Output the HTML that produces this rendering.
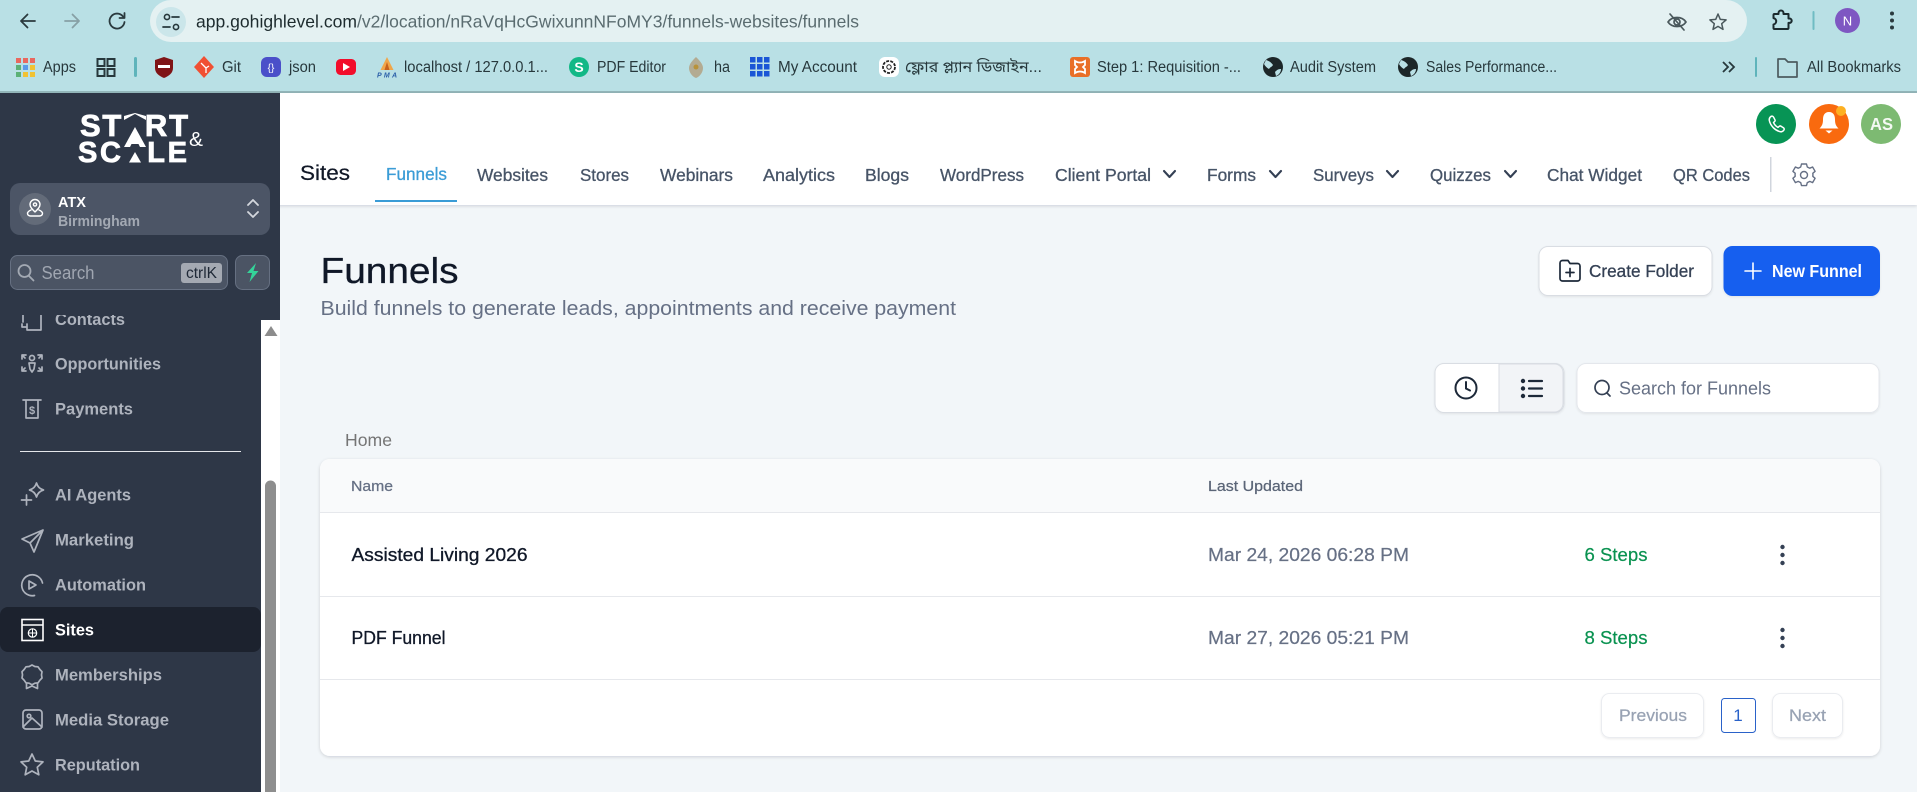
<!DOCTYPE html>
<html lang="en">
<head>
<meta charset="utf-8">
<title>Funnels</title>
<style>
html,body{margin:0;padding:0;width:1917px;height:792px;overflow:hidden;background:#f2f6f9}
svg{display:block;position:absolute;left:0;top:0}
text{font-family:"Liberation Sans","Noto Sans CJK SC",sans-serif;white-space:pre}
.bm{font-size:15.5px;fill:#27383c}
.side{font-size:17px;font-weight:700;fill:#aeb3bd}
.nav{font-size:17.5px;fill:#475467;stroke:#475467;stroke-width:.3px}
.ic{fill:none;stroke:#aeb3bd;stroke-width:1.7;stroke-linecap:round;stroke-linejoin:round}
.ch{fill:none;stroke:#344054;stroke-width:2.1;stroke-linecap:round;stroke-linejoin:round}
.tb{fill:none;stroke:#2a3a3e;stroke-width:1.8;stroke-linecap:round;stroke-linejoin:round}
</style>
</head>
<body>
<svg width="1917" height="792" viewBox="0 0 1917 792" xmlns="http://www.w3.org/2000/svg">
<defs>
<clipPath id="menuClip"><rect x="0" y="315" width="261" height="477"/></clipPath>
<filter id="sh" x="-2%" y="-10%" width="104%" height="125%"><feDropShadow dx="0" dy="1" stdDeviation="1.5" flood-color="#101828" flood-opacity=".16"/></filter>
<filter id="sh2" x="-10%" y="-10%" width="120%" height="125%"><feDropShadow dx="0" dy="1" stdDeviation="1" flood-color="#101828" flood-opacity=".08"/></filter>
</defs>

<!-- page -->
<rect width="1917" height="792" fill="#f2f6f9"/>

<!-- browser chrome -->
<rect width="1917" height="93" fill="#b9e0e5"/>
<rect y="91" width="1917" height="2" fill="#93b6ba"/>
<path d="M171 0H1726a21 21 0 0 1 21 21a21 21 0 0 1-21 21H171a21 21 0 0 1-21-21a21 21 0 0 1 21-21z" fill="#e4f1f2"/>
<path class="tb" d="M35 21H21M27.500 14.500L21 21l6.500 6.500"/>
<path class="tb" style="stroke:#87a0a5" d="M65 21h14M72.500 14.500L79 21l-6.500 6.500"/>
<path class="tb" d="M123 16.500a7.500 7.500 0 1 0 1.500 5.500M124.500 13v5h-5"/>
<circle cx="171" cy="22" r="15" fill="#cbe6ea"/>
<path d="M172 17h7M163 27h7" stroke="#27383c" stroke-width="1.700" fill="none" stroke-linecap="round"/>
<circle cx="167" cy="17" r="2.600" fill="none" stroke="#27383c" stroke-width="1.600"/>
<circle cx="176" cy="27" r="2.600" fill="none" stroke="#27383c" stroke-width="1.600"/>
<text x="196" y="27.500" font-size="17.500" fill="#1d2b2e" textLength="161" lengthAdjust="spacingAndGlyphs">app.gohighlevel.com</text>
<text x="357" y="27.500" font-size="17.500" fill="#5a6c70" textLength="502" lengthAdjust="spacingAndGlyphs">/v2/location/nRaVqHcGwixunnNFoMY3/funnels-websites/funnels</text>

<!-- omnibox right icons -->
<g fill="none" stroke="#4a585c" stroke-width="1.700" stroke-linecap="round" stroke-linejoin="round">
<path d="M1668 22c4-6 14-6 18 0c-4 6-14 6-18 0z"/><circle cx="1677" cy="22" r="3"/><path d="M1670 14l14 16"/>
<path d="M1718 14l2.300 5.400 5.800.5-4.400 3.800 1.300 5.700-5-3-5 3 1.300-5.700-4.400-3.800 5.800-.5z" stroke-width="1.500"/>
</g>
<path d="M1774 14h4.500v-1a2.500 2.500 0 0 1 5 0v1h5v4.500h1a2.200 2.200 0 0 1 0 4.400h-1v5.100a1 1 0 0 1-1 1h-13a1 1 0 0 1-1-1v-3.500c1.500-.3 2.700-1.600 2.700-3.200s-1.200-2.900-2.700-3.200V15a1 1 0 0 1 1-1z" fill="none" stroke="#1b2a2e" stroke-width="2" stroke-linejoin="round"/>
<rect x="1812.500" y="11" width="2" height="19" rx="1" fill="#6fbcc3"/>
<circle cx="1847.500" cy="20.500" r="12.500" fill="#7e57c2"/>
<text x="1847.500" y="25.500" font-size="13" fill="#fff" text-anchor="middle">N</text>
<g fill="#2a3a3e"><circle cx="1892" cy="13.500" r="2"/><circle cx="1892" cy="20.500" r="2"/><circle cx="1892" cy="27.500" r="2"/></g>

<!-- bookmarks -->
<g>
<g>
<rect x="16" y="58" width="5" height="5" fill="#e9685e"/><rect x="23" y="58" width="5" height="5" fill="#e9685e"/><rect x="30" y="58" width="5" height="5" fill="#e9685e"/>
<rect x="16" y="65" width="5" height="5" fill="#5cb176"/><rect x="23" y="65" width="5" height="5" fill="#5b9be8"/><rect x="30" y="65" width="5" height="5" fill="#f1c232"/>
<rect x="16" y="72" width="5" height="5" fill="#5cb176"/><rect x="23" y="72" width="5" height="5" fill="#f1c232"/><rect x="30" y="72" width="5" height="5" fill="#f1c232"/>
</g>
<text class="bm" x="43" y="72" textLength="33" lengthAdjust="spacingAndGlyphs">Apps</text>
<g fill="none" stroke="#27383c" stroke-width="2"><rect x="97.500" y="59" width="7" height="7"/><rect x="107.500" y="59" width="7" height="7"/><rect x="97.500" y="69" width="7" height="7"/><rect x="107.500" y="69" width="7" height="7"/></g>
<rect x="134" y="57" width="3" height="20" rx="1.500" fill="#5fb4bb"/>
<path d="M155 60l9-3 9 3v8c0 5-4 8-9 10c-5-2-9-5-9-10z" fill="#7f1416"/><rect x="158" y="65" width="12" height="3" fill="#fff"/>
<path d="M204 56l10 11-10 11-10-11z" fill="#f05033"/><path d="M201 63l5 5M206 68v5M206 68l3-2" stroke="#fff" stroke-width="1.300" fill="none"/>
<text class="bm" x="222" y="72" textLength="19" lengthAdjust="spacingAndGlyphs">Git</text>
<rect x="261" y="57" width="20" height="20" rx="6" fill="#4a4fc9"/><text x="271" y="71" font-size="10" fill="#fff" text-anchor="middle">{}</text>
<text class="bm" x="289" y="72" textLength="27" lengthAdjust="spacingAndGlyphs">json</text>
<rect x="336" y="59" width="20" height="16" rx="4.500" fill="#f20d2b"/><path d="M343 63l7 4-7 4z" fill="#fff"/>
<path d="M387 57l6.500 13h-13z" fill="#f0a64a"/><path d="M387 62l2.500 8h-5z" fill="#c7611b"/>
<text x="377" y="77.500" font-size="7" font-weight="700" font-style="italic" fill="#2a5ea8" textLength="20">PMA</text>
<text class="bm" x="404" y="72" textLength="144" lengthAdjust="spacingAndGlyphs">localhost / 127.0.0.1...</text>
<circle cx="579" cy="67" r="10" fill="#12b886"/><text x="579" y="72" font-size="14" font-weight="700" fill="#fff" text-anchor="middle">S</text>
<text class="bm" x="597" y="72" textLength="69" lengthAdjust="spacingAndGlyphs">PDF Editor</text>
<path d="M696 57c3 3 7 7 7 11c0 5-4 9-7 10c-3-1-7-5-7-10c0-4 4-8 7-11z" fill="#b3ab92"/><circle cx="696" cy="67" r="2.500" fill="#b8923a"/>
<text class="bm" x="714" y="72" textLength="16" lengthAdjust="spacingAndGlyphs">ha</text>
<g fill="#1a56d6"><rect x="750" y="57" width="5.500" height="5.500"/><rect x="757" y="57" width="5.500" height="5.500"/><rect x="764" y="57" width="5.500" height="5.500"/><rect x="750" y="64" width="5.500" height="5.500"/><rect x="757" y="64" width="5.500" height="5.500"/><rect x="764" y="64" width="5.500" height="5.500"/><rect x="750" y="71" width="5.500" height="5.500"/><rect x="757" y="71" width="5.500" height="5.500"/><rect x="764" y="71" width="5.500" height="5.500"/></g>
<text class="bm" x="778" y="72" textLength="79" lengthAdjust="spacingAndGlyphs">My Account</text>
<rect x="879" y="57" width="20" height="20" rx="6" fill="#fff"/><circle cx="889" cy="67" r="6" fill="none" stroke="#222" stroke-width="1.800" stroke-dasharray="3 1.200"/><circle cx="889" cy="67" r="2.200" fill="none" stroke="#222"/>
<text class="bm" x="905" y="72" textLength="137" lengthAdjust="spacingAndGlyphs" style="font-family:'Liberation Sans','Noto Sans Bengali','Noto Sans CJK SC',sans-serif">ফ্লোর প্ল্যান ডিজাইন...</text>
<rect x="1070" y="57" width="20" height="20" rx="3" fill="#e96f27"/><path d="M1075 61c3 2 7 2 10 0v4l-2 2 2 2v4c-3-2-7-2-10 0v-4l2-2-2-2z" fill="none" stroke="#fff" stroke-width="1.800"/>
<text class="bm" x="1097" y="72" textLength="144" lengthAdjust="spacingAndGlyphs">Step 1: Requisition -...</text>
<circle cx="1273" cy="67" r="10" fill="#1c2628"/><path d="M1266 60c3 1 5 2 7 5c-1 2-3 2-4 4c-2-1-4-3-5-5zM1275 72c2-2 3-3 6-3c0 3-2 6-5 7z" fill="#b9e0e5"/>
<text class="bm" x="1290" y="72" textLength="86" lengthAdjust="spacingAndGlyphs">Audit System</text>
<circle cx="1408" cy="67" r="10" fill="#1c2628"/><path d="M1401 60c3 1 5 2 7 5c-1 2-3 2-4 4c-2-1-4-3-5-5zM1410 72c2-2 3-3 6-3c0 3-2 6-5 7z" fill="#b9e0e5"/>
<text class="bm" x="1426" y="72" textLength="131" lengthAdjust="spacingAndGlyphs">Sales Performance...</text>
<path d="M1723 62l5 5-5 5M1729 62l5 5-5 5" fill="none" stroke="#27383c" stroke-width="1.800"/>
<rect x="1755" y="57" width="2" height="20" rx="1" fill="#5fb4bb"/>
<path d="M1778 59h7l3 3h9v15h-19z" fill="none" stroke="#4c5b5f" stroke-width="1.700" stroke-linejoin="round"/>
<text class="bm" x="1807" y="72" textLength="94" lengthAdjust="spacingAndGlyphs">All Bookmarks</text>
</g>

<!-- header -->
<rect x="261" y="93" width="1656" height="112" fill="#fff" filter="url(#sh)"/>
<text x="300" y="180" font-size="21" fill="#111827" stroke="#111827" stroke-width=".25" textLength="50" lengthAdjust="spacingAndGlyphs">Sites</text>
<text class="nav" x="386" y="180" style="fill:#3b9cd6;stroke:#3b9cd6" textLength="61" lengthAdjust="spacingAndGlyphs">Funnels</text>
<rect x="375" y="200" width="82" height="2" fill="#3b9cd6"/>
<text class="nav" x="477" y="181" textLength="71" lengthAdjust="spacingAndGlyphs">Websites</text>
<text class="nav" x="580" y="181" textLength="49" lengthAdjust="spacingAndGlyphs">Stores</text>
<text class="nav" x="660" y="181" textLength="73" lengthAdjust="spacingAndGlyphs">Webinars</text>
<text class="nav" x="763" y="181" textLength="72" lengthAdjust="spacingAndGlyphs">Analytics</text>
<text class="nav" x="865" y="181" textLength="44" lengthAdjust="spacingAndGlyphs">Blogs</text>
<text class="nav" x="940" y="181" textLength="84" lengthAdjust="spacingAndGlyphs">WordPress</text>
<text class="nav" x="1055" y="181" textLength="96" lengthAdjust="spacingAndGlyphs">Client Portal</text>
<path class="ch" d="M1164 171l5.500 6 5.500-6"/>
<text class="nav" x="1207" y="181" textLength="49" lengthAdjust="spacingAndGlyphs">Forms</text>
<path class="ch" d="M1270 171l5.500 6 5.500-6"/>
<text class="nav" x="1313" y="181" textLength="61" lengthAdjust="spacingAndGlyphs">Surveys</text>
<path class="ch" d="M1387 171l5.500 6 5.500-6"/>
<text class="nav" x="1430" y="181" textLength="61" lengthAdjust="spacingAndGlyphs">Quizzes</text>
<path class="ch" d="M1505 171l5.500 6 5.500-6"/>
<text class="nav" x="1547" y="181" textLength="95" lengthAdjust="spacingAndGlyphs">Chat Widget</text>
<text class="nav" x="1673" y="181" textLength="77" lengthAdjust="spacingAndGlyphs">QR Codes</text>
<rect x="1770" y="157" width="1.500" height="35" fill="#d0d5dd"/>
<g fill="none" stroke="#667085" stroke-width="1.400" stroke-linejoin="round">
<path d="M1801.500 164h5l.8 3 2.500 1.200 2.800-1.200 2.500 4.300-2.300 2c.2 1 .2 2 0 3l2.300 2-2.500 4.300-2.800-1.200-2.500 1.200-.8 3h-5l-.8-3-2.500-1.200-2.800 1.200-2.500-4.300 2.300-2c-.2-1-.2-2 0-3l-2.300-2 2.500-4.300 2.800 1.200 2.500-1.200z"/>
<circle cx="1804" cy="175" r="3.500"/>
</g>

<!-- top right circles -->
<circle cx="1776" cy="124" r="20" fill="#079455"/>
<path d="M1771 116.500c1-.7 2-.3 2.600.7l1.300 2.500c.4.800.2 1.500-.5 2l-.9.800c.9 2.100 2.600 3.900 4.600 4.900l.9-.9c.6-.6 1.300-.7 2-.3l2.400 1.500c.9.600 1.100 1.600.4 2.500c-.9 1.200-2.100 1.900-3.600 1.500c-5.300-1.300-9.800-6-10.900-11.300c-.3-1.700.5-3.100 1.700-4z" fill="none" stroke="#fff" stroke-width="1.500" stroke-linejoin="round"/>
<circle cx="1829" cy="124" r="20" fill="#f96a0f"/>
<path d="M1829 112c-4.500 0-6 3.500-6 7.500c0 4.500-1 6.500-3.500 9h19c-2.500-2.500-3.500-4.500-3.500-9c0-4-1.500-7.500-6-7.500z" fill="#fff"/><path d="M1825.500 130.500h7l-3.500 3z" fill="#fff"/>
<circle cx="1841" cy="111" r="5" fill="#fdb022"/>
<circle cx="1881" cy="124" r="20" fill="#7dba72"/>
<text x="1881.500" y="130" font-size="17.500" font-weight="700" fill="#f4f9f3" text-anchor="middle" textLength="23" lengthAdjust="spacingAndGlyphs">AS</text>

<!-- title -->
<text x="320.500" y="283" font-size="36" fill="#101828" stroke="#101828" stroke-width=".3" textLength="138" lengthAdjust="spacingAndGlyphs">Funnels</text>
<text x="320.500" y="315" font-size="20" fill="#667085" textLength="635.500" lengthAdjust="spacingAndGlyphs">Build funnels to generate leads, appointments and receive payment</text>

<!-- buttons -->
<rect x="1539" y="246.500" width="173" height="49" rx="9" fill="#fff" stroke="#d9dde3" filter="url(#sh2)"/>
<g fill="none" stroke="#1d2939" stroke-width="1.700" stroke-linejoin="round" stroke-linecap="round">
<path d="M1560 263a2.500 2.500 0 0 1 2.500-2.500h5.500l2 3h7.500a2.500 2.500 0 0 1 2.500 2.500v12.500a2.500 2.500 0 0 1-2.500 2.500h-15a2.500 2.500 0 0 1-2.500-2.500z"/>
<path d="M1570 268.500v8M1566 272.500h8"/>
</g>
<text x="1589" y="277" font-size="17.500" fill="#344054" stroke="#344054" stroke-width=".3" textLength="105" lengthAdjust="spacingAndGlyphs">Create Folder</text>
<rect x="1723.500" y="246" width="156.500" height="50" rx="9" fill="#155eef" filter="url(#sh2)"/>
<path d="M1753 263v16M1745 271h16" stroke="#fff" stroke-width="1.600" fill="none" stroke-linecap="round"/>
<text x="1772" y="277" font-size="17.500" font-weight="700" fill="#fff" textLength="90" lengthAdjust="spacingAndGlyphs">New Funnel</text>

<!-- toolbar -->
<g filter="url(#sh2)">
<rect x="1435" y="363.500" width="129" height="49" rx="9" fill="#fff" stroke="#d9dde3"/>
<path d="M1499 364h55.500a8.500 8.500 0 0 1 8.500 8.500v31a8.500 8.500 0 0 1-8.500 8.500h-55.500z" fill="#f2f4f7" stroke="#d9dde3"/>
</g>
<circle cx="1466" cy="388" r="10.500" fill="none" stroke="#1d2939" stroke-width="2"/>
<path d="M1466 382v6.500l4 2" fill="none" stroke="#1d2939" stroke-width="2" stroke-linecap="round"/>
<g fill="#1d2939"><circle cx="1523" cy="381" r="2.200"/><circle cx="1523" cy="388.500" r="2.200"/><circle cx="1523" cy="396" r="2.200"/></g>
<path d="M1529 381h13M1529 388.500h13M1529 396h13" stroke="#1d2939" stroke-width="2.200" fill="none" stroke-linecap="round"/>
<rect x="1577" y="363.500" width="302" height="49" rx="9" fill="#fff" stroke="#e4e7ec" filter="url(#sh2)"/>
<circle cx="1602" cy="387.500" r="7" fill="none" stroke="#344054" stroke-width="1.700"/>
<path d="M1607 393l3 3" stroke="#344054" stroke-width="1.700" fill="none" stroke-linecap="round"/>
<text x="1619" y="394.500" font-size="18" fill="#667085" textLength="152" lengthAdjust="spacingAndGlyphs">Search for Funnels</text>

<text x="345" y="446" font-size="17.500" fill="#757575" textLength="47" lengthAdjust="spacingAndGlyphs">Home</text>

<!-- table -->
<rect x="320" y="459" width="1560" height="297" rx="10" fill="#fff" filter="url(#sh)"/>
<path d="M330 459h1540a10 10 0 0 1 10 10v43H320v-43a10 10 0 0 1 10-10z" fill="#f9fafb"/>
<rect x="320" y="512" width="1560" height="1" fill="#e6e8ec"/>
<rect x="320" y="596" width="1560" height="1" fill="#e6e8ec"/>
<rect x="320" y="679" width="1560" height="1" fill="#e6e8ec"/>
<text x="351" y="491" font-size="14.500" fill="#667085" stroke="#667085" stroke-width=".25" textLength="42" lengthAdjust="spacingAndGlyphs">Name</text>
<text x="1208" y="491" font-size="14.500" fill="#5b6577" stroke="#5b6577" stroke-width=".25" textLength="95" lengthAdjust="spacingAndGlyphs">Last Updated</text>

<text x="351.500" y="561" font-size="18" fill="#101828" stroke="#101828" stroke-width=".3" textLength="176" lengthAdjust="spacingAndGlyphs">Assisted Living 2026</text>
<text x="1208" y="561" font-size="18" fill="#667085" stroke="#667085" stroke-width=".2" textLength="201" lengthAdjust="spacingAndGlyphs">Mar 24, 2026 06:28 PM</text>
<text x="1584.500" y="561" font-size="18" fill="#099250" stroke="#099250" stroke-width=".2" textLength="63" lengthAdjust="spacingAndGlyphs">6 Steps</text>
<g fill="#344054"><circle cx="1782.500" cy="547" r="2.200"/><circle cx="1782.500" cy="555" r="2.200"/><circle cx="1782.500" cy="563" r="2.200"/></g>

<text x="351.500" y="644" font-size="18" fill="#101828" stroke="#101828" stroke-width=".3" textLength="94" lengthAdjust="spacingAndGlyphs">PDF Funnel</text>
<text x="1208" y="644" font-size="18" fill="#667085" stroke="#667085" stroke-width=".2" textLength="201" lengthAdjust="spacingAndGlyphs">Mar 27, 2026 05:21 PM</text>
<text x="1584.500" y="644" font-size="18" fill="#099250" stroke="#099250" stroke-width=".2" textLength="63" lengthAdjust="spacingAndGlyphs">8 Steps</text>
<g fill="#344054"><circle cx="1782.500" cy="630" r="2.200"/><circle cx="1782.500" cy="638" r="2.200"/><circle cx="1782.500" cy="646" r="2.200"/></g>

<!-- pagination -->
<rect x="1601.500" y="693.500" width="102" height="44" rx="8" fill="#fff" stroke="#eaecf0" filter="url(#sh2)"/>
<text x="1619" y="721" font-size="17" fill="#98a2b3" stroke="#98a2b3" stroke-width=".25" textLength="68" lengthAdjust="spacingAndGlyphs">Previous</text>
<rect x="1721.500" y="698.500" width="34" height="34" rx="3" fill="#fff" stroke="#2a62c9"/>
<text x="1738" y="721" font-size="17" fill="#2a62c9" text-anchor="middle">1</text>
<rect x="1772.500" y="693.500" width="70" height="44" rx="8" fill="#fff" stroke="#eaecf0" filter="url(#sh2)"/>
<text x="1789" y="721" font-size="17" fill="#98a2b3" stroke="#98a2b3" stroke-width=".25" textLength="37" lengthAdjust="spacingAndGlyphs">Next</text>

<!-- sidebar -->
<rect x="0" y="93" width="280" height="699" fill="#2e3747"/>
<rect x="261" y="320" width="19" height="472" fill="#fff"/>
<path d="M271 326l6.500 10h-13z" fill="#8c8c8c"/>
<path d="M265 792V486a5.500 5.500 0 0 1 11 0v306z" fill="#8e8e8e"/>

<!-- logo -->
<text x="80" y="136" font-size="31" font-weight="700" fill="#fff" stroke="#fff" stroke-width=".8" textLength="108">ST<tspan fill="transparent" stroke="none">A</tspan>RT</text>
<text x="78" y="162" font-size="29" font-weight="700" fill="#fff" stroke="#fff" stroke-width=".8" textLength="109">SC<tspan fill="transparent" stroke="none">A</tspan>LE</text>
<path d="M124 120l11-6 11 6v-4l-11-3-11 3z" fill="#fff"/>
<path d="M135 127l11 20h-6l-1.500-3h-7l-1.500 3h-6z" fill="#fff"/>
<path d="M135 152l6 10.500h-12z" fill="#fff"/>
<text x="189" y="146" font-size="20" fill="#fff" textLength="14" lengthAdjust="spacingAndGlyphs">&amp;</text>

<!-- location -->
<rect x="10" y="183" width="260" height="52" rx="10" fill="#4c5566"/>
<circle cx="35" cy="209" r="16" fill="#636b79"/>
<g fill="none" stroke="#fff" stroke-width="1.400" stroke-linecap="round" stroke-linejoin="round">
<path d="M35 212c-3-3-5-5-5-7.500a5 5 0 0 1 10 0c0 2.500-2 4.500-5 7.500z"/><circle cx="35" cy="204.500" r="1.600"/>
<path d="M31 210c-2 .8-3.500 2-3.500 3.500c0 1.500 1.500 2.500 3 2.500h9c1.500 0 3-1 3-2.500c0-1.500-1.500-2.700-3.500-3.500"/>
</g>
<text x="58" y="207" font-size="15" font-weight="700" fill="#fff" textLength="28" lengthAdjust="spacingAndGlyphs">ATX</text>
<text x="58" y="226" font-size="15" font-weight="700" fill="#a3a9b3" textLength="82" lengthAdjust="spacingAndGlyphs">Birmingham</text>
<path d="M248 205l5-5 5 5M248 212l5 5 5-5" fill="none" stroke="#d4d7dd" stroke-width="1.800" stroke-linecap="round" stroke-linejoin="round"/>

<!-- search -->
<rect x="10.500" y="255.500" width="217" height="34" rx="7" fill="#4b5464" stroke="#667082"/>
<circle cx="24.500" cy="271" r="6" fill="none" stroke="#a3a9b3" stroke-width="1.800"/><path d="M29 276l4.500 4.500" stroke="#a3a9b3" stroke-width="1.800" stroke-linecap="round"/>
<text x="41.500" y="279" font-size="18" fill="#a0a6b1" textLength="53" lengthAdjust="spacingAndGlyphs">Search</text>
<rect x="181" y="263" width="41" height="20" rx="3" fill="#a4a9b2"/>
<text x="186" y="278" font-size="15.500" fill="#1f2937" textLength="31" lengthAdjust="spacingAndGlyphs">ctrlK</text>
<rect x="235.500" y="255.500" width="34" height="34" rx="7" fill="#4b5464" stroke="#667082"/>
<path d="M256 263l-9 10h5l-2.500 9 9-11h-5z" fill="#34d399"/>

<!-- menu -->
<g clip-path="url(#menuClip)">
<path class="ic" d="M23 306v16M41 306v16M22 327h5M27 324v6h14v-8M22 324v3"/>
<text class="side" x="55" y="325" textLength="70" lengthAdjust="spacingAndGlyphs">Contacts</text>
</g>

<g class="ic" fill="none">
<circle cx="32" cy="358" r="2.500"/><path d="M29 363h6l-1 6-2 3-2-3z"/>
<path d="M22 359v-4h4M42 359v-4h-4M22 367v4h4M42 367v4h-4M23 356l2 2M41 356l-2 2M23 370l2-2M41 370l-2-2"/>
</g>
<text class="side" x="55" y="369.500" textLength="106" lengthAdjust="spacingAndGlyphs">Opportunities</text>

<g class="ic"><path d="M23 400h18M26 400v18h12v-18"/></g>
<text x="32" y="414" font-size="11" font-weight="700" fill="#aeb3bd" text-anchor="middle">$</text>
<text class="side" x="55" y="414.500" textLength="78" lengthAdjust="spacingAndGlyphs">Payments</text>

<rect x="20" y="451" width="221" height="1" fill="#e5e7eb"/>

<path class="ic" d="M36.500 483c1 3.500 3.500 6 7 7c-3.500 1-6 3.500-7 7c-1-3.500-3.500-6-7-7c3.500-1 6-3.500 7-7zM26.500 495v10M21.500 500h10"/>
<text class="side" x="55" y="500.500" textLength="76" lengthAdjust="spacingAndGlyphs">AI Agents</text>

<path class="ic" d="M43 530l-21 9 8 4 4 9zM30 543l13-13"/>
<text class="side" x="55" y="545.500" textLength="79" lengthAdjust="spacingAndGlyphs">Marketing</text>

<path class="ic" d="M42.500 583a10.500 10.500 0 1 0-8 12.500M29 581l7 4-7 4z"/>
<text class="side" x="55" y="590.500" textLength="91" lengthAdjust="spacingAndGlyphs">Automation</text>

<rect x="0" y="607" width="261" height="45" rx="8" fill="#1c222e"/>
<g fill="none" stroke="#fff" stroke-width="1.600">
<rect x="22" y="619.500" width="21" height="21"/><path d="M22 625h21"/>
<circle cx="32.500" cy="633" r="4.200" stroke-width="1.200"/><path d="M28.300 633h8.400M32.500 628.800v8.400" stroke-width="1"/>
</g>
<text class="side" x="55" y="635.500" style="fill:#fff" textLength="39" lengthAdjust="spacingAndGlyphs">Sites</text>

<g class="ic"><path d="M32 665l2.800 1.500 3.200.3 1.800 2.600 2.200 2.300-.5 3.200.5 3.100-2.200 2.300-1.800 2.600-3.200.3-2.800 1.500-2.800-1.500-3.200-.3-1.800-2.600-2.200-2.300.5-3.100-.5-3.200 2.200-2.300 1.800-2.600 3.200-.3z"/><path d="M26.500 684v4.500l5.500-2.500 5.500 2.500v-4.500"/></g>
<text class="side" x="55" y="680.500" textLength="107" lengthAdjust="spacingAndGlyphs">Memberships</text>

<g class="ic"><rect x="23" y="710" width="19" height="19" rx="3"/><circle cx="29" cy="716" r="1.800"/><path d="M23 727l9-9 10 9"/></g>
<text class="side" x="55" y="725.500" textLength="114" lengthAdjust="spacingAndGlyphs">Media Storage</text>

<path class="ic" d="M32 754l3.300 7 7.700.9-5.700 5.300 1.500 7.600-6.800-3.800-6.800 3.800 1.500-7.600-5.700-5.300 7.700-.9z"/>
<text class="side" x="55" y="770.500" textLength="85" lengthAdjust="spacingAndGlyphs">Reputation</text>
</svg>
</body>
</html>
